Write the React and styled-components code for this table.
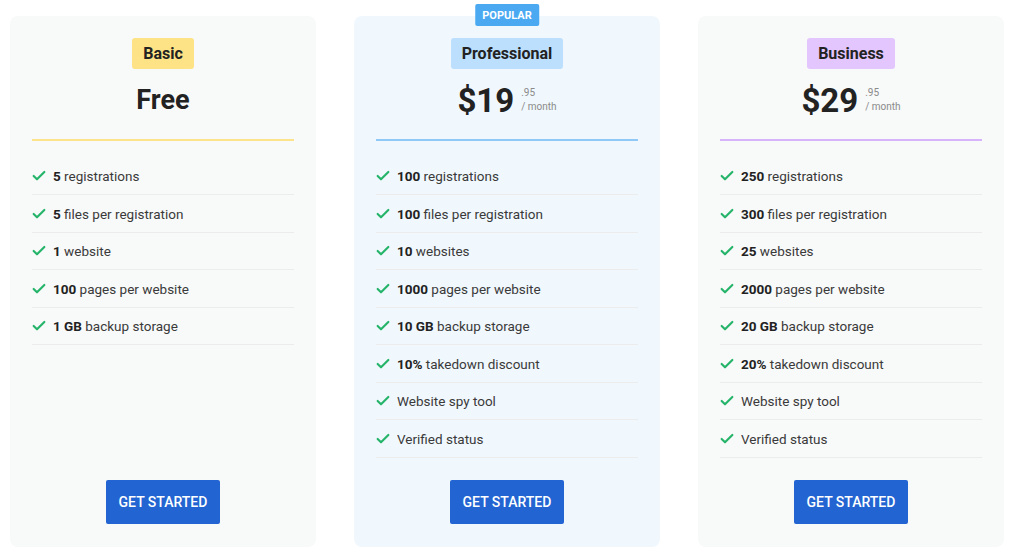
import React from 'react';
import styled, { createGlobalStyle } from 'styled-components';
import { Check } from 'lucide-react';

const GlobalStyle = createGlobalStyle`
  body {
    margin: 0;
    background: #ffffff;
    font-family: Roboto, "Liberation Sans", sans-serif;
    color: #2a2a2a;
  }
`;

const Page = styled.div`
  display: flex;
  gap: 38px;
  padding: 16px 0 0 10px;
`;

const Card = styled.div`
  position: relative;
  width: 306px;
  height: 531px;
  box-sizing: border-box;
  padding: 22px 22px 23px;
  border-radius: 8px;
  background: ${(p) => (p.popular ? '#f1f8fd' : '#f8f9f9')};
  display: flex;
  flex-direction: column;
  align-items: center;
`;

const Popular = styled.div`
  position: absolute;
  top: -12px;
  left: 50%;
  transform: translateX(-50%);
  height: 22px;
  padding: 0 7px;
  display: flex;
  align-items: center;
  background: #4ba9f2;
  color: #fff;
  font-size: 11px;
  font-weight: 700;
  border-radius: 2px;
`;

const Badge = styled.div`
  height: 31px;
  padding: 0 11px;
  display: flex;
  align-items: center;
  border-radius: 3px;
  background: ${(p) => p.bg};
  font-size: 16px;
  font-weight: 700;
  color: #222;
`;

const PriceRow = styled.div`
  height: 62px;
  display: flex;
  align-items: center;
  justify-content: center;
`;

const Amount = styled.span`
  font-size: ${(p) => (p.free ? '27px' : '33px')};
  font-weight: 700;
  color: #222;
`;

const Cents = styled.div`
  margin-left: 7px;
  display: flex;
  flex-direction: column;
  font-size: 10px;
  line-height: 14px;
  color: #8a8a8a;
  margin-top: -1px;
`;

const Divider = styled.div`
  align-self: stretch;
  height: 2px;
  margin-top: 8px;
  background: ${(p) => p.color};
`;

const List = styled.ul`
  list-style: none;
  margin: 16.5px 0 0;
  padding: 0;
  align-self: stretch;
  flex: 1;
`;

const Item = styled.li`
  display: flex;
  align-items: center;
  gap: 6px;
  height: 37.5px;
  box-sizing: border-box;
  border-bottom: 1px solid #ececec;
  font-size: 13.5px;
  color: #3a3a3a;
  padding-top: 1px;

  svg {
    flex-shrink: 0;
    margin-left: -1px;
  }

  b {
    color: #222;
    font-weight: 700;
  }
`;

const Button = styled.button`
  width: 114px;
  height: 44px;
  border: none;
  border-radius: 2px;
  background: #2264d1;
  color: #fff;
  font-family: Roboto, "Liberation Sans", sans-serif;
  font-size: 14px;
  font-weight: 500;
  cursor: pointer;
`;

const plans = [
  {
    name: 'Basic',
    badge: '#fde385',
    line: '#fde38a',
    price: 'Free',
    features: [
      ['5', 'registrations'],
      ['5', 'files per registration'],
      ['1', 'website'],
      ['100', 'pages per website'],
      ['1 GB', 'backup storage'],
    ],
  },
  {
    name: 'Professional',
    badge: '#bbdffd',
    line: '#90c9f8',
    price: '$19',
    popular: true,
    features: [
      ['100', 'registrations'],
      ['100', 'files per registration'],
      ['10', 'websites'],
      ['1000', 'pages per website'],
      ['10 GB', 'backup storage'],
      ['10%', 'takedown discount'],
      [null, 'Website spy tool'],
      [null, 'Verified status'],
    ],
  },
  {
    name: 'Business',
    badge: '#e2c6fd',
    line: '#d6b3fb',
    price: '$29',
    features: [
      ['250', 'registrations'],
      ['300', 'files per registration'],
      ['25', 'websites'],
      ['2000', 'pages per website'],
      ['20 GB', 'backup storage'],
      ['20%', 'takedown discount'],
      [null, 'Website spy tool'],
      [null, 'Verified status'],
    ],
  },
];

export default function App() {
  return (
    <>
      <GlobalStyle />
      <Page>
        {plans.map((plan) => (
          <Card key={plan.name} popular={plan.popular ? 1 : 0}>
            {plan.popular && <Popular>POPULAR</Popular>}
            <Badge bg={plan.badge}>{plan.name}</Badge>
            <PriceRow>
              <Amount free={plan.price === 'Free' ? 1 : 0}>{plan.price}</Amount>
              {plan.price !== 'Free' && (
                <Cents>
                  <span>.95</span>
                  <span>/ month</span>
                </Cents>
              )}
            </PriceRow>
            <Divider color={plan.line} />
            <List>
              {plan.features.map(([num, text]) => (
                <Item key={text}>
                  <Check size={16} strokeWidth={3.2} color="#25b46a" />
                  <span>
                    {num && <b>{num} </b>}
                    {text}
                  </span>
                </Item>
              ))}
            </List>
            <Button>GET STARTED</Button>
          </Card>
        ))}
      </Page>
    </>
  );
}
